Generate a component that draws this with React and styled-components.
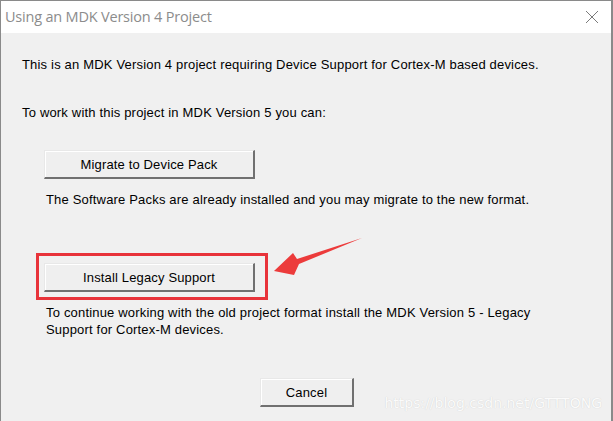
import React from "react";
import styled, { createGlobalStyle } from "styled-components";

const Global = createGlobalStyle`
  html, body { margin: 0; padding: 0; background: #f0f0f0; }
  body { width: 613px; height: 421px; overflow: hidden; }
  #root { width: 613px; height: 421px; }
`;

const Window = styled.div`
  position: relative;
  box-sizing: border-box;
  width: 613px;
  height: 421px;
  border-top: 1px solid #8a8a8a;
  border-left: 1px solid #8a8a8a;
  border-right: 2px solid #8a8a8a;
  background: #f0f0f0;
  display: flex;
  flex-direction: column;
  font-family: "Liberation Sans", Arial, sans-serif;
  color: #000;
`;

const TitleBar = styled.div`
  height: 32px;
  background: #fff;
  display: flex;
  align-items: center;
  justify-content: space-between;
  padding: 0 12px 0 4px;
  flex-shrink: 0;
`;

const Title = styled.div`
  font-family: "Open Sans", "Noto Sans", sans-serif;
  font-size: 14.5px;
  color: #8c8c8c;
  letter-spacing: -0.2px;
  margin-top: -1px;
`;

const Body = styled.div`
  flex: 1;
  display: flex;
  flex-direction: column;
  padding: 23px 0 0 21px;
`;

const Text = styled.div`
  font-size: 13px;
  line-height: 17px;
  letter-spacing: 0.18px;
  margin-top: ${(p) => p.$mt || 0}px;
  margin-left: ${(p) => p.$ml || 0}px;
  width: ${(p) => (p.$w ? p.$w + "px" : "auto")};
`;

const Button = styled.button`
  box-sizing: border-box;
  width: ${(p) => p.$w}px;
  height: 29px;
  margin-top: ${(p) => p.$mt || 0}px;
  margin-left: ${(p) => p.$ml || 0}px;
  background: #efefef;
  border-style: solid;
  border-width: 1px 2px 2px 1px;
  border-color: #e8e8e8 #707070 #707070 #e8e8e8;
  box-shadow: inset 1px 1px 0 #fff;
  font-family: "Liberation Sans", Arial, sans-serif;
  font-size: 13px;
  letter-spacing: 0.15px;
  color: #000;
  padding: 0;
  align-self: flex-start;
`;

const Highlight = styled.div`
  box-sizing: border-box;
  align-self: flex-start;
  margin-top: 45px;
  margin-left: 14px;
  border: 3px solid #e8333a;
  padding: 7px 10px 5px 5px;
  display: flex;
`;

const Arrow = styled.svg`
  position: absolute;
  left: 265px;
  top: 230px;
`;

const Footer = styled.div`
  display: flex;
  margin-top: 40px;
  margin-left: 238px;
`;

const Watermark = styled.div`
  position: absolute;
  right: 9px;
  bottom: 10px;
  font-family: "DejaVu Sans", sans-serif;
  font-size: 14px;
  color: #fbfbfb;
  text-shadow: 0 0 1px #c8c8c8;
`;

export default function App() {
  return (
    <>
      <Global />
      <Window>
        <TitleBar>
          <Title>Using an MDK Version 4 Project</Title>
          <svg width="14" height="14" viewBox="0 0 14 14">
            <path d="M1 1 L13 13 M13 1 L1 13" stroke="#7a7a7a" strokeWidth="1" />
          </svg>
        </TitleBar>
        <Body>
          <Text>This is an MDK Version 4 project requiring Device Support for Cortex-M based devices.</Text>
          <Text $mt={31}>To work with this project in MDK Version 5 you can:</Text>
          <Button $w={211} $mt={29} $ml={22}>Migrate to Device Pack</Button>
          <Text $mt={12} $ml={24}>The Software Packs are already installed and you may migrate to the new format.</Text>
          <Highlight>
            <Button $w={211}>Install Legacy Support</Button>
          </Highlight>
          <Text $mt={4} $ml={24} $w={510}>
            To continue working with the old project format install the MDK Version 5 - Legacy Support for Cortex-M devices.
          </Text>
          <Footer>
            <Button $w={94}>Cancel</Button>
          </Footer>
        </Body>
        <Arrow width="100" height="50" viewBox="0 0 100 50">
          <path d="M96 7 L31 28 L27 22 L8 40 L28 44 L33 33 Z" fill="#ec3b3b" />
        </Arrow>
        <Watermark>https://blog.csdn.net/GTTTONG</Watermark>
      </Window>
    </>
  );
}
